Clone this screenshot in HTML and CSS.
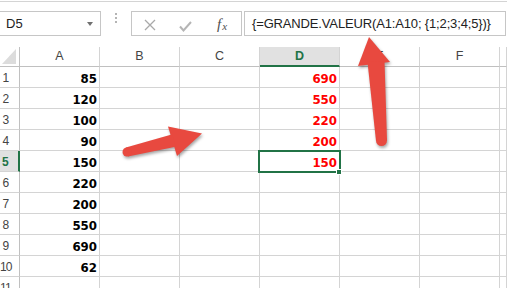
FILE: index.html
```html
<!DOCTYPE html>
<html lang="fr">
<head>
<meta charset="utf-8">
<title>GRANDE.VALEUR</title>
<link rel="stylesheet" href="styles.css">
</head>
<body>
<div class="ribbon-edge"></div>
<div class="formula-bar">
  <div class="name-box"><span class="name">D5</span><span class="caret"></span></div>
  <div class="grip"><i></i><i></i><i></i></div>
  <div class="fx-box">
    <span class="fx-btn btn-cancel">
      <svg width="12" height="12" viewBox="0 0 12 12"><path d="M1 1 L11 11 M11 1 L1 11" stroke="#a9a9a9" stroke-width="1.3" fill="none"/></svg>
    </span>
    <span class="fx-btn btn-enter">
      <svg width="13" height="11" viewBox="0 0 13 11"><path d="M1 5.5 L4.5 9.5 L12 1" stroke="#b5b5b5" stroke-width="2" fill="none"/></svg>
    </span>
    <span class="fx-btn btn-fx"><span class="fx-f">f</span><span class="fx-x">x</span></span>
  </div>
  <div class="formula">{=GRANDE.VALEUR(A1:A10; {1;2;3;4;5})}</div>
</div>

<div class="sheet">
  <div class="hcell corner"><span class="corner-tri"></span></div>
  <div class="hcell col">A</div>
  <div class="hcell col">B</div>
  <div class="hcell col">C</div>
  <div class="hcell col active">D</div>
  <div class="hcell col">E</div>
  <div class="hcell col">F</div>
  <div class="hcell col"></div>

  <div class="rh">1</div><div class="c num">85</div><div class="c"></div><div class="c"></div><div class="c num red">690</div><div class="c"></div><div class="c"></div><div class="c"></div>
  <div class="rh">2</div><div class="c num">120</div><div class="c"></div><div class="c"></div><div class="c num red">550</div><div class="c"></div><div class="c"></div><div class="c"></div>
  <div class="rh">3</div><div class="c num">100</div><div class="c"></div><div class="c"></div><div class="c num red">220</div><div class="c"></div><div class="c"></div><div class="c"></div>
  <div class="rh">4</div><div class="c num">90</div><div class="c"></div><div class="c"></div><div class="c num red">200</div><div class="c"></div><div class="c"></div><div class="c"></div>
  <div class="rh active">5</div><div class="c num">150</div><div class="c"></div><div class="c"></div><div class="c num red selected">150<span class="handle"></span></div><div class="c"></div><div class="c"></div><div class="c"></div>
  <div class="rh">6</div><div class="c num">220</div><div class="c"></div><div class="c"></div><div class="c"></div><div class="c"></div><div class="c"></div><div class="c"></div>
  <div class="rh">7</div><div class="c num">200</div><div class="c"></div><div class="c"></div><div class="c"></div><div class="c"></div><div class="c"></div><div class="c"></div>
  <div class="rh">8</div><div class="c num">550</div><div class="c"></div><div class="c"></div><div class="c"></div><div class="c"></div><div class="c"></div><div class="c"></div>
  <div class="rh">9</div><div class="c num">690</div><div class="c"></div><div class="c"></div><div class="c"></div><div class="c"></div><div class="c"></div><div class="c"></div>
  <div class="rh">10</div><div class="c num">62</div><div class="c"></div><div class="c"></div><div class="c"></div><div class="c"></div><div class="c"></div><div class="c"></div>
  <div class="rh">11</div><div class="c"></div><div class="c"></div><div class="c"></div><div class="c"></div><div class="c"></div><div class="c"></div><div class="c"></div>
</div>

<svg class="arrows" width="507" height="288" viewBox="0 0 507 288">
  <g class="arrow">
    <polygon points="202,133.5 168,126.5 177,156"/>
    <polygon points="125.9,147.6 172.5,134.2 175.5,146.8 128.1,156.4"/>
    <circle cx="127" cy="152" r="4.5"/>
  </g>
  <g class="arrow">
    <polygon points="369,37 358,66 390,62"/>
    <polygon points="367.5,62 384.5,61 387,140.5 376,141"/>
    <circle cx="381.5" cy="140.5" r="5.5"/>
  </g>
</svg>
</body>
</html>
```

FILE: styles.css
```css
* { box-sizing: border-box; }

html, body {
  margin: 0;
  padding: 0;
  background: #ffffff;
}

body {
  width: 507px;
  height: 288px;
  overflow: hidden;
  position: relative;
  font-family: "Liberation Sans", Arial, sans-serif;
  color: #222;
}

.ribbon-edge {
  height: 2px;
  border-bottom: 1px solid #d4d4d4;
}

.formula-bar {
  display: flex;
  height: 25px;
  margin-top: 9px;
}

.name-box {
  position: relative;
  width: 101px;
  height: 25px;
  border: 1px solid #c6c6c6;
  border-left: none;
  font-size: 13px;
  line-height: 23px;
  padding-left: 6px;
  color: #222;
}

.caret {
  position: absolute;
  left: 87px;
  top: 10px;
  width: 0;
  height: 0;
  border-left: 3.5px solid transparent;
  border-right: 3.5px solid transparent;
  border-top: 4px solid #707070;
}

.grip {
  width: 30px;
  display: flex;
  flex-direction: column;
  align-items: center;
  padding-top: 2px;
  gap: 2px;
}

.grip i {
  display: block;
  width: 2px;
  height: 2px;
  background: #b4b4b4;
}

.fx-box {
  width: 111px;
  height: 25px;
  border: 1px solid #c6c6c6;
  display: flex;
  align-items: center;
}

.fx-btn {
  display: flex;
  justify-content: center;
  align-items: center;
  height: 23px;
  padding-top: 3px;
}

.btn-cancel { width: 36px; }
.btn-enter { width: 35px; padding-top: 5px; }
.btn-fx { width: 38px; padding-top: 2px; }

.fx-f {
  font-family: "Liberation Serif", "Times New Roman", serif;
  font-style: italic;
  font-size: 15px;
  color: #505050;
}

.fx-x {
  font-family: "Liberation Serif", "Times New Roman", serif;
  font-style: italic;
  font-size: 11px;
  color: #505050;
  margin-left: 1px;
  margin-top: 3px;
}

.formula {
  flex: 1;
  height: 25px;
  margin-left: 2px;
  margin-right: 1px;
  border: 1px solid #c6c6c6;
  font-size: 13px;
  line-height: 23px;
  padding-left: 7px;
  letter-spacing: -0.15px;
  color: #222;
  white-space: nowrap;
}

.sheet {
  margin-top: 11px;
  display: grid;
  grid-template-columns: 20px repeat(6, 80px) 1fr;
  grid-template-rows: 20px;
  grid-auto-rows: 21px;
}

.hcell {
  border-right: 1px solid #d4d4d4;
  border-bottom: 1px solid #c0c0c0;
  font-size: 12.5px;
  color: #444;
  text-align: center;
  line-height: 19px;
}

.corner {
  position: relative;
  border-right-color: #c0c0c0;
}

.corner-tri {
  position: absolute;
  right: 3px;
  bottom: 2px;
  width: 0;
  height: 0;
  border-left: 14px solid transparent;
  border-bottom: 15px solid #dcdcdc;
}

.hcell.active {
  background: #e1e1e1;
  color: #217346;
  font-weight: bold;
  border-bottom: 2px solid #217346;
  line-height: 18px;
}

.rh {
  border-right: 1px solid #c0c0c0;
  border-bottom: 1px solid #d4d4d4;
  font-size: 12px;
  letter-spacing: -0.8px;
  color: #444;
  text-align: center;
  padding-right: 8px;
  line-height: 20px;
  padding-top: 1px;
}

.rh.active {
  background: #e1e1e1;
  color: #217346;
  font-weight: bold;
  border-right: 2px solid #217346;
}

.c {
  border-right: 1px solid #d4d4d4;
  border-bottom: 1px solid #d4d4d4;
}

.num {
  font-family: "DejaVu Sans", Verdana, sans-serif;
  font-weight: bold;
  font-size: 11.8px;
  text-align: right;
  padding-right: 2px;
  padding-top: 2px;
  line-height: 20px;
  color: #000;
}

.num.red { color: #ff0000; }

.selected {
  position: relative;
}

.selected::after {
  content: "";
  position: absolute;
  left: -2px;
  top: -1px;
  right: -2px;
  bottom: -2px;
  border: 2px solid #217346;
  pointer-events: none;
}

.handle {
  position: absolute;
  right: -3px;
  bottom: -4px;
  width: 6px;
  height: 6px;
  background: #217346;
  border: 1px solid #ffffff;
  z-index: 2;
}

.arrows {
  position: absolute;
  left: 0;
  top: 0;
  pointer-events: none;
}

.arrow {
  fill: #e8493f;
  filter: drop-shadow(1px 2px 1.5px rgba(0, 0, 0, 0.35));
}
```
